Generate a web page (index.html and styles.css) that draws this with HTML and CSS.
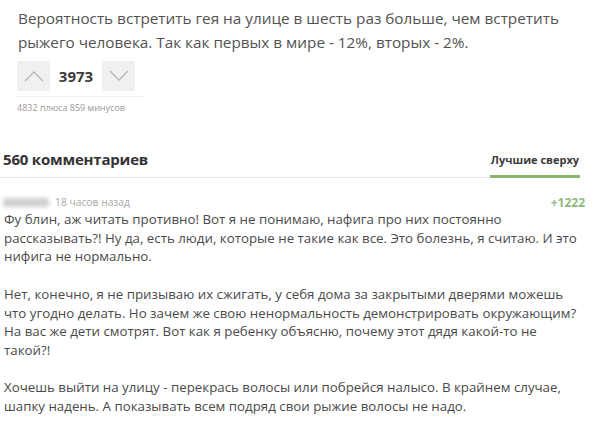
FILE: index.html
```html
<!DOCTYPE html>
<html lang="ru">
<head>
<meta charset="utf-8">
<link rel="stylesheet" href="styles.css">
</head>
<body>
<div class="post">
  <p class="post-text">Вероятность встретить гея на улице в шесть раз больше, чем встретить<br>рыжего человека. Так как первых в мире - 12%, вторых - 2%.</p>
  <div class="votes">
    <div class="vote-btn"><svg width="20" height="12" viewBox="0 0 20 12"><path d="M1 11 L10 2 L19 11" fill="none" stroke="#b5b5b5" stroke-width="1.3"/></svg></div>
    <div class="score">3973</div>
    <div class="vote-btn"><svg width="20" height="12" viewBox="0 0 20 12"><path d="M1 1 L10 10 L19 1" fill="none" stroke="#b5b5b5" stroke-width="1.3"/></svg></div>
  </div>
  <div class="vote-info">4832 плюса 859 минусов</div>
</div>
<div class="comments-head">
  <div class="comments-count">560 комментариев</div>
  <div class="sort">Лучшие сверху</div>
</div>
<div class="comment">
  <div class="comment-meta">
    <span class="author"></span>
    <span class="time">18 часов назад</span>
    <span class="rating">+1222</span>
  </div>
  <div class="comment-body">
    <p>Фу блин, аж читать противно! Вот я не понимаю, нафига про них постоянно<br>рассказывать?! Ну да, есть люди, которые не такие как все. Это болезнь, я считаю. И это<br>нифига не нормально.</p>
    <p>Нет, конечно, я не призываю их сжигать, у себя дома за закрытыми дверями можешь<br>что угодно делать. Но зачем же свою ненормальность демонстрировать окружающим?<br>На вас же дети смотрят. Вот как я ребенку объясню, почему этот дядя какой-то не<br>такой?!</p>
    <p>Хочешь выйти на улицу - перекрась волосы или побрейся налысо. В крайнем случае,<br>шапку надень. А показывать всем подряд свои рыжие волосы не надо.</p>
  </div>
</div>
</body>
</html>
```

FILE: styles.css
```css
html, body {
  margin: 0;
  padding: 0;
  background: #fff;
}
body {
  font-family: "Open Sans", "Noto Sans", sans-serif;
  color: #4a4a4a;
  width: 593px;
  height: 431px;
  overflow: hidden;
}
p { margin: 0; }
.post {
  padding: 6px 0 0 18px;
}
.post-text {
  font-size: 15.3px;
  line-height: 24px;
  white-space: nowrap;
  color: #525252;
}
.votes {
  display: flex;
  align-items: center;
  margin: 7px 0 0 -1px;
  width: 127px;
  padding-bottom: 5px;
  border-bottom: 1px solid #f0f0f0;
}
.vote-btn {
  width: 33px;
  height: 30px;
  background: #f0f0f0;
  display: flex;
  align-items: center;
  justify-content: center;
}
.score {
  width: 52px;
  text-align: center;
  font-weight: 700;
  font-size: 15px;
  color: #3a3a3a;
}
.vote-info {
  margin: 4px 0 0 -1px;
  font-size: 9px;
  color: #9a9a9a;
  line-height: 14px;
}
.comments-head {
  display: flex;
  justify-content: space-between;
  align-items: flex-end;
  margin: 33px 13px 0 0;
  border-bottom: 1px solid #e6e6e6;
}
.comments-count {
  font-size: 15px;
  letter-spacing: -0.2px;
  font-weight: 700;
  color: #333;
  padding: 0 0 7px 3px;
  line-height: 22px;
}
.sort {
  font-size: 11px;
  font-weight: 700;
  color: #3a3a3a;
  padding: 0 0 7px;
  line-height: 16px;
  width: 90px;
  text-align: center;
  border-bottom: 3px solid #8db56d;
  margin-bottom: -1px;
}
.comment {
  padding: 16px 8px 0 4px;
}
.comment-meta {
  display: flex;
  align-items: center;
  height: 16px;
}
.author {
  width: 46px;
  height: 9px;
  margin-left: -1px;
  background: #cfcfcf;
  filter: blur(2px);
  border-radius: 3px;
}
.time {
  margin-left: 6px;
  font-size: 10.3px;
  color: #a8a8a8;
}
.rating {
  margin-left: auto;
  font-size: 12px;
  font-weight: 700;
  color: #8cbb7c;
}
.comment-body {
  font-size: 13.3px;
  line-height: 18.7px;
  color: #4a4a4a;
  white-space: nowrap;
}
.comment-body p {
  margin-bottom: 18.7px;
}
```
